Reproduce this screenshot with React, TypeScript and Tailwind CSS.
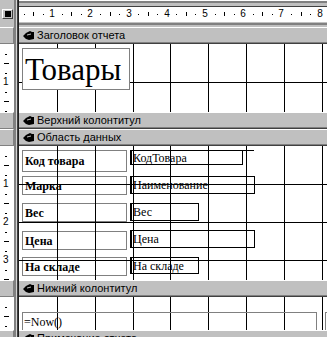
import { FC } from "react";

const GRID_X = [38, 76, 114, 151, 189, 227, 265, 303];

const Divider: FC = () => (
  <div className="flex w-[5px] shrink-0">
    <div className="w-px bg-[#808080]" />
    <div className="w-px bg-[#808080]" />
    <div className="w-px bg-[#d4d4d4]" />
    <div className="w-px bg-[#404040]" />
    <div className="w-px bg-[#202020]" />
  </div>
);

const Hand: FC = () => (
  <svg width="11" height="9" viewBox="0 0 11 9" className="shrink-0">
    <path d="M0 5 L3 2 L5 1 L7 0 L9 1 L11 1 L11 8 L6 9 L3 8 Z" fill="#000" />
    <path d="M4 4 L8 3" stroke="#c0c0c0" strokeWidth="1" />
  </svg>
);

const SectionBar: FC<{ title: string }> = ({ title }) => (
  <div className="flex h-[17px] shrink-0">
    <div className="w-[14px] shrink-0 bg-[#c0c0c0] border-t border-white border-b border-b-[#808080] border-r border-r-[#808080]" />
    <Divider />
    <div className="flex flex-1 items-center gap-[3px] pl-[4px] bg-[#c0c0c0] border-t border-white border-b border-b-[#404040] shadow-[inset_0_-1px_0_#808080] overflow-hidden">
      <Hand />
      <span className="text-[11px] leading-none text-black whitespace-nowrap font-['Liberation_Sans',Arial,sans-serif]">{title}</span>
    </div>
  </div>
);

// vertical ruler: marks every quarter centimetre
const VRuler: FC<{ height: number }> = ({ height }) => {
  const marks = [];
  for (let i = 1; i * 9.5 < height; i++) {
    const y = Math.round(i * 9.5);
    if (i % 4 === 0) {
      marks.push(
        <span
          key={i}
          className="absolute left-[3px] text-[10px] leading-none font-['Liberation_Sans',Arial,sans-serif] -translate-y-1/2"
          style={{ top: y }}
        >
          {i / 4}
        </span>
      );
    } else if (i % 2 === 0) {
      marks.push(<div key={i} className="absolute left-[4px] w-[5px] h-px bg-black" style={{ top: y }} />);
    } else {
      marks.push(<div key={i} className="absolute left-[5px] w-[2px] h-px bg-black" style={{ top: y }} />);
    }
  }
  return <div className="relative w-[14px] shrink-0 bg-white overflow-hidden">{marks}</div>;
};

const Grid: FC<{ rows: number[] }> = ({ rows }) => (
  <>
    {GRID_X.map((x) => (
      <div key={x} className="absolute top-0 bottom-0 w-px bg-black" style={{ left: x }} />
    ))}
    {rows.map((y) => (
      <div key={y} className="absolute left-0 right-0 h-px bg-black" style={{ top: y }} />
    ))}
  </>
);

const TopRuler: FC = () => {
  const marks = [];
  for (let i = 1; i <= 33; i++) {
    const x = Math.round(i * 9.55 - 5);
    if (x > 306) break;
    if (i % 4 === 0) {
      marks.push(
        <span
          key={i}
          className="absolute top-[2px] text-[10px] leading-none -translate-x-1/2 font-['Liberation_Sans',Arial,sans-serif]"
          style={{ left: x }}
        >
          {i / 4}
        </span>
      );
    } else if (i % 2 === 0) {
      marks.push(<div key={i} className="absolute top-[5px] w-px h-[4px] bg-black" style={{ left: x }} />);
    } else {
      marks.push(<div key={i} className="absolute top-[7px] w-px h-px bg-black" style={{ left: x }} />);
    }
  }
  return (
    <div className="flex h-[27px] shrink-0">
      <div className="w-[14px] shrink-0 bg-[#c0c0c0] pt-[9px] pl-[2px]">
        <div className="w-[11px] h-[10px] flex items-center justify-center border-t border-l border-white border-b border-r border-b-[#404040] border-r-[#404040]">
          <div className="w-[6px] h-[6px] bg-black" />
        </div>
      </div>
      <Divider />
      <div className="flex flex-1 flex-col">
        <div className="h-px bg-white" />
        <div className="h-[2px] bg-[#808080]" />
        <div className="h-[3px] bg-[#c0c0c0]" />
        <div className="h-px bg-[#404040]" />
        <div className="relative h-[15px] bg-white">{marks}</div>
        <div className="h-px bg-[#c0c0c0]" />
        <div className="h-[2px] bg-[#808080]" />
        <div className="h-[2px] bg-[#c0c0c0]" />
      </div>
    </div>
  );
};

const serif = "font-['Liberation_Serif','Times_New_Roman',serif]";

const labels = [
  { text: "Код товара", top: 4, h: 22 },
  { text: "Марка", top: 30, h: 19 },
  { text: "Вес", top: 57, h: 19 },
  { text: "Цена", top: 85, h: 19 },
  { text: "На складе", top: 111, h: 19 },
];

const fields = [
  { text: "КодТовара", top: 4, w: 113, h: 15 },
  { text: "Наименование", top: 30, w: 125, h: 18 },
  { text: "Вес", top: 57, w: 69, h: 18 },
  { text: "Цена", top: 84, w: 125, h: 18 },
  { text: "На складе", top: 111, w: 69, h: 17 },
];

export default function App() {
  return (
    <div className="w-[327px] h-[337px] overflow-hidden flex flex-col bg-[#c0c0c0] text-black">
      <TopRuler />

      <SectionBar title="Заголовок отчета" />
      <div className="flex h-[68px] shrink-0">
        <VRuler height={68} />
        <Divider />
        <div className="relative flex-1 bg-white overflow-hidden">
          <Grid rows={[38]} />
          <div className="absolute left-[3px] top-[4px] w-[108px] h-[42px] bg-white border border-[#808080] flex items-center pl-[2px]">
            <span className={`${serif} text-[31px] leading-none`}>Товары</span>
          </div>
        </div>
      </div>

      <SectionBar title="Верхний колонтитул" />
      <SectionBar title="Область данных" />

      <div className="flex h-[134px] shrink-0">
        <VRuler height={134} />
        <Divider />
        <div className="relative flex-1 bg-white overflow-hidden">
          {labels.map((l) => (
            <div
              key={l.text}
              className="absolute left-[3px] w-[105px] border border-[#808080] flex items-center pl-[2px]"
              style={{ top: l.top, height: l.h }}
            >
              <span className={`${serif} text-[12px] font-bold leading-none`}>{l.text}</span>
            </div>
          ))}
          <Grid rows={[38, 76, 114]} />
          {fields.map((f) => (
            <div
              key={f.text + f.top}
              className="absolute left-[111px] border border-black border-l-2 flex items-center pl-[1px]"
              style={{ top: f.top, width: f.w, height: f.h }}
            >
              <span className={`${serif} text-[12px] leading-none`}>{f.text}</span>
            </div>
          ))}
          <div className="absolute left-[111px] top-[4px] w-[124px] h-px bg-black" />
        </div>
      </div>

      <SectionBar title="Нижний колонтитул" />
      <div className="flex h-[33px] shrink-0">
        <VRuler height={33} />
        <Divider />
        <div className="relative flex-1 bg-white overflow-hidden">
          <Grid rows={[]} />
          <div className="absolute left-[3px] top-[15px] w-[295px] h-[25px] border border-[#808080] flex items-start pl-px pt-[3px]">
            <span className={`${serif} text-[12px] leading-none`}>=Now()</span>
          </div>
          <div className="absolute left-[306px] top-[15px] w-[10px] h-[25px] border border-[#808080]" />
        </div>
      </div>

      <SectionBar title="Примечание отчета" />
    </div>
  );
}
